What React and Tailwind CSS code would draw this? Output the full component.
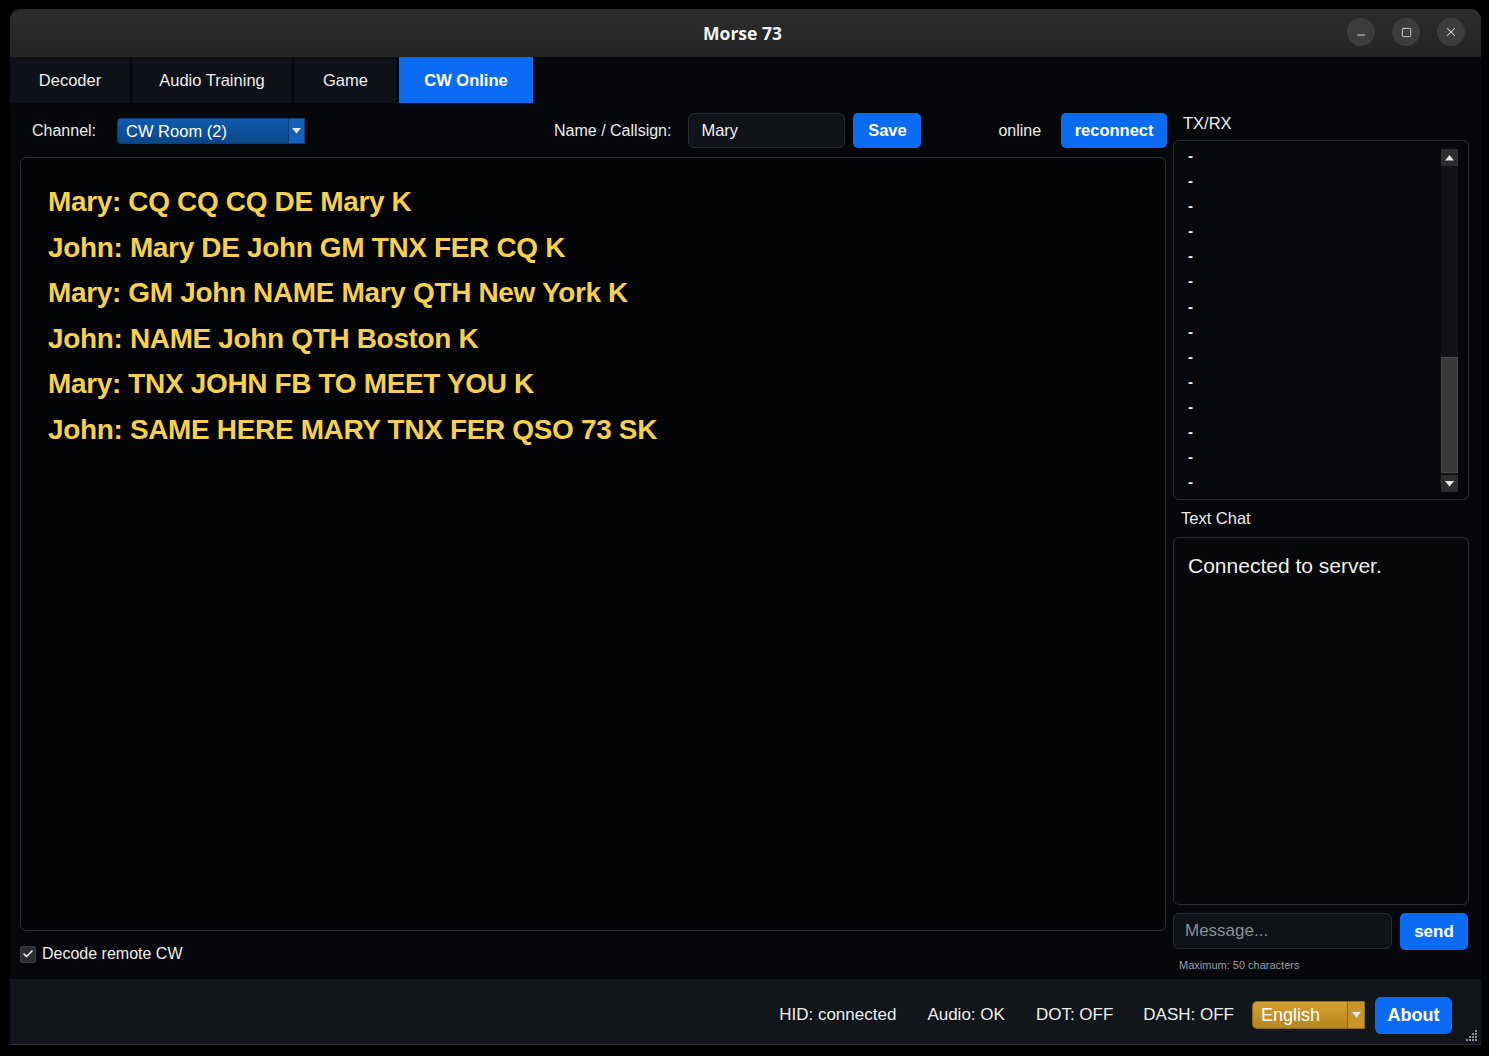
import { X, Minus, Square, Check } from 'lucide-react'

const lines = [
  'Mary: CQ CQ CQ DE Mary K',
  'John: Mary DE John GM TNX FER CQ K',
  'Mary: GM John NAME Mary QTH New York K',
  'John: NAME John QTH Boston K',
  'Mary: TNX JOHN FB TO MEET YOU K',
  'John: SAME HERE MARY TNX FER QSO 73 SK',
]

const tabs = [
  { name: 'Decoder', w: 'w-[120px]' },
  { name: 'Audio Training', w: 'w-[160px]' },
  { name: 'Game', w: 'w-[103px]' },
  { name: 'CW Online', w: 'w-[134px]', active: true },
]

function Caret() {
  return (
    <svg width="9" height="6" viewBox="0 0 9 6">
      <path d="M0 0 L9 0 L4.5 5.5 Z" fill="#e6e6e6" />
    </svg>
  )
}

function Scrollbar() {
  return (
    <div className="absolute right-[10px] top-[8px] bottom-[7px] w-[17px] flex flex-col bg-[#101215]">
      <div className="h-[17px] bg-[#2c2d2f] flex items-center justify-center">
        <svg width="9" height="6" viewBox="0 0 9 6"><path d="M0 5.5 L9 5.5 L4.5 0 Z" fill="#e6e6e6" /></svg>
      </div>
      <div className="flex-1 flex flex-col">
        <div className="h-[191px]" />
        <div className="h-[116px] bg-[#38393b] border border-[#48494b]" />
      </div>
      <div className="h-[17px] bg-[#2c2d2f] flex items-center justify-center">
        <Caret />
      </div>
    </div>
  )
}

export default function App() {
  return (
    <div className="w-[1489px] h-[1056px] bg-black pt-[9px] pl-[10px] font-['Liberation_Sans',Arial,sans-serif] text-[#f0f0f0]">
      <div className="w-[1471px] h-[1036px] rounded-t-[10px] overflow-hidden flex flex-col bg-[#05070a] border-b border-[#2a2d31]">
        {/* title bar */}
        <div className="h-[48px] shrink-0 bg-gradient-to-b from-[#2c2c2c] to-[#242424] relative flex items-center justify-center">
          <span className="font-['Open_Sans',sans-serif] font-bold text-[17.5px] text-[#f2f2f2] -translate-x-[3px]">Morse 73</span>
          <div className="absolute right-[16px] top-[9px] flex gap-[17px]">
            <div className="w-[28px] h-[28px] rounded-full bg-[#3c3c3c] flex items-center justify-center">
              <Minus size={12} strokeWidth={2} className="text-[#d6d6d6] translate-y-[3px]" />
            </div>
            <div className="w-[28px] h-[28px] rounded-full bg-[#3c3c3c] flex items-center justify-center">
              <Square size={11} strokeWidth={2} className="text-[#d6d6d6]" />
            </div>
            <div className="w-[28px] h-[28px] rounded-full bg-[#3c3c3c] flex items-center justify-center">
              <X size={14} strokeWidth={1.8} className="text-[#d6d6d6]" />
            </div>
          </div>
        </div>

        {/* tabs */}
        <div className="h-[46px] shrink-0 flex gap-[2px]">
          {tabs.map((t) => (
            <div
              key={t.name}
              className={`${t.w} flex items-center justify-center text-[16.5px] ${t.active ? 'bg-[#0b6cf3] text-white font-bold' : 'bg-[#0e1117] text-[#ededed]'}`}
            >
              {t.name}
            </div>
          ))}
        </div>

        {/* main */}
        <div className="flex-1 flex pl-[10px] pr-[12px] pt-[10px] gap-[7px]">
          {/* left column */}
          <div className="w-[1146px] flex flex-col">
            <div className="h-[35px] flex items-center text-[16px] whitespace-nowrap">
              <span className="ml-[12px] text-[#ececec]">Channel:</span>
              <div className="ml-[21px] w-[188px] h-[26px] shrink-0 flex rounded-l-[4px] overflow-hidden bg-gradient-to-b from-[#0f5bb0] to-[#0b4687] border border-[#0a3e78]">
                <span className="flex-1 pl-[8px] text-[16.5px] leading-[24px] text-white">CW Room (2)</span>
                <div className="w-[16px] bg-[#1563b8] border-l border-[#0a3e78] flex items-center justify-center">
                  <Caret />
                </div>
              </div>
              <span className="ml-[249px] shrink-0 text-[#ececec]">Name / Callsign:</span>
              <div className="ml-[17px] w-[157px] h-[35px] shrink-0 rounded-[6px] bg-[#0f1318] border border-[#262b33] flex items-center pl-[12px] text-[16.5px] text-[#f0f0f0]">
                Mary
              </div>
              <button className="ml-[8px] w-[68px] h-[35px] shrink-0 rounded-[5px] bg-[#0b6cf3] text-white font-bold text-[16.5px]">Save</button>
              <span className="ml-[77px] text-[#ececec]">online</span>
              <button className="ml-[20px] w-[106px] h-[35px] shrink-0 rounded-[5px] bg-[#0b6cf3] text-white font-bold text-[16.5px]">reconnect</button>
            </div>
            <div className="mt-[9px] h-[774px] rounded-[6px] border border-[#2a2f37] bg-[#030406] pl-[27px] pt-[21px]">
              {lines.map((l) => (
                <div key={l} className="text-[28px] leading-[45.5px] font-bold tracking-[-0.35px] text-[#f5d04e] [text-shadow:0_0_3px_rgba(0,0,0,0.9)]">
                  {l}
                </div>
              ))}
            </div>
            <div className="mt-[11px] flex items-center">
              <div className="w-[16px] h-[17px] rounded-[2px] bg-[#2b2e32] border border-[#3a3d42] flex items-center justify-center">
                <Check size={12} strokeWidth={3} className="text-white" />
              </div>
              <span className="ml-[6px] text-[16px] text-[#ededed]">Decode remote CW</span>
            </div>
          </div>

          {/* right column */}
          <div className="w-[296px] flex flex-col">
            <div className="h-[20px] pl-[10px] text-[16.5px] leading-[20px] text-[#ececec]">TX/RX</div>
            <div className="mt-[7px] h-[360px] rounded-[6px] border border-[#2a2f37] bg-[#06080b] relative pl-[14px] pt-[2px]">
              {Array.from({ length: 14 }).map((_, i) => (
                <div key={i} className="text-[15px] leading-[25.1px] text-white font-bold">-</div>
              ))}
              <Scrollbar />
            </div>
            <div className="mt-[8px] h-[20px] pl-[8px] text-[16.5px] leading-[20px] text-[#ececec]">Text Chat</div>
            <div className="mt-[9px] h-[368px] rounded-[6px] border border-[#2a2f37] bg-[#050709] pl-[14px] pt-[12px] text-[21px] text-[#f0f0f0]">
              Connected to server.
            </div>
            <div className="mt-[8px] h-[36px] flex gap-[8px]">
              <div className="w-[219px] rounded-[6px] bg-[#0f1318] border border-[#262b33] flex items-center pl-[11px] text-[17px] text-[#8c9096]">
                Message...
              </div>
              <button className="w-[68px] h-[37px] rounded-[5px] bg-[#0b6cf3] text-white font-bold text-[17px]">send</button>
            </div>
            <div className="mt-[8px] pl-[6px] text-[11px] text-[#9a9ea4]">Maximum: 50 characters</div>
          </div>
        </div>

        {/* status bar */}
        <div className="h-[65px] shrink-0 bg-[#12151a] relative flex items-center justify-end pr-[29px] pt-[7px] text-[17px] text-[#eeeeee]">
          <span>HID: connected</span>
          <span className="ml-[31px]">Audio: OK</span>
          <span className="ml-[31px]">DOT: OFF</span>
          <span className="ml-[30px]">DASH: OFF</span>
          <div className="ml-[18px] w-[113px] h-[28px] flex rounded-l-[5px] overflow-hidden bg-gradient-to-b from-[#d4a030] to-[#b8861f] border border-[#8f6a18]">
            <span className="flex-1 pl-[8px] text-[18px] leading-[26px] text-white">English</span>
            <div className="w-[17px] border-l border-[#8f6a18] bg-[#c8952a] flex items-center justify-center">
              <Caret />
            </div>
          </div>
          <button className="ml-[10px] w-[77px] h-[37px] rounded-[6px] bg-[#0b6cf3] text-white font-bold text-[18px]">About</button>
          <svg className="absolute right-[3px] bottom-[2px]" width="13" height="13" viewBox="0 0 13 13">
            {[[10, 1], [7, 4], [10, 4], [4, 7], [7, 7], [10, 7], [1, 10], [4, 10], [7, 10], [10, 10]].map(([x, y]) => (
              <rect key={`${x}-${y}`} x={x} y={y} width="2" height="2" fill="#8a8d92" />
            ))}
          </svg>
        </div>
      </div>
    </div>
  )
}
